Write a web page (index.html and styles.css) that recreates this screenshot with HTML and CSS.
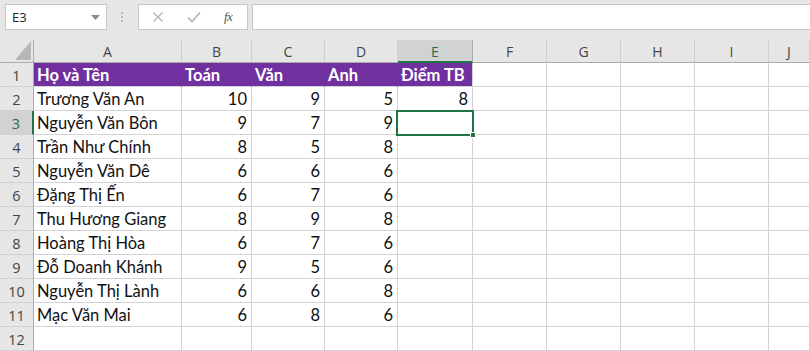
FILE: index.html
```html
<!DOCTYPE html>
<html lang="vi">
<head>
<meta charset="utf-8">
<title>Excel</title>
<link rel="stylesheet" href="styles.css">
</head>
<body>
<div class="toolbar">
  <div class="namebox">
    <span class="nb-text">E3</span>
    <svg class="nb-arrow" width="9" height="5" viewBox="0 0 9 5"><path d="M0 0H9L4.5 5Z" fill="#8a8a8a"/></svg>
  </div>
  <div class="dots"><span></span><span></span><span></span></div>
  <div class="fbtns">
    <svg class="fb-icon" width="12" height="12" viewBox="0 0 12 12"><path d="M1.5 1.5L10.5 10.5M10.5 1.5L1.5 10.5" stroke="#b3b3b3" stroke-width="1.3" fill="none"/></svg>
    <svg class="fb-icon" width="14" height="12" viewBox="0 0 14 12"><path d="M1 6.5L5 10.5L13 1.5" stroke="#b3b3b3" stroke-width="1.6" fill="none"/></svg>
    <span class="fx">fx</span>
  </div>
  <div class="finput"></div>
</div>
<div class="sheet">
  <div class="ch corner"><svg width="16" height="19" viewBox="0 0 16 19"><path d="M16 0V19H0Z" fill="#b6b6b6"/></svg></div>
  <div class="ch">A</div><div class="ch">B</div><div class="ch">C</div><div class="ch">D</div><div class="ch sel">E</div><div class="ch">F</div><div class="ch">G</div><div class="ch">H</div><div class="ch">I</div><div class="ch">J</div>

  <div class="rh">1</div><div class="c hd">Họ và Tên</div><div class="c hd">Toán</div><div class="c hd">Văn</div><div class="c hd">Anh</div><div class="c hd hd-last">Điểm TB</div><div class="c"></div><div class="c"></div><div class="c"></div><div class="c"></div><div class="c"></div>

  <div class="rh">2</div><div class="c">Trương Văn An</div><div class="c n">10</div><div class="c n">9</div><div class="c n">5</div><div class="c n">8</div><div class="c"></div><div class="c"></div><div class="c"></div><div class="c"></div><div class="c"></div>

  <div class="rh rsel">3</div><div class="c">Nguyễn Văn Bôn</div><div class="c n">9</div><div class="c n">7</div><div class="c n">9</div><div class="c active"><span class="selbox"><span class="handle"></span></span></div><div class="c"></div><div class="c"></div><div class="c"></div><div class="c"></div><div class="c"></div>

  <div class="rh">4</div><div class="c">Trần Như Chính</div><div class="c n">8</div><div class="c n">5</div><div class="c n">8</div><div class="c"></div><div class="c"></div><div class="c"></div><div class="c"></div><div class="c"></div><div class="c"></div>

  <div class="rh">5</div><div class="c">Nguyễn Văn Dê</div><div class="c n">6</div><div class="c n">6</div><div class="c n">6</div><div class="c"></div><div class="c"></div><div class="c"></div><div class="c"></div><div class="c"></div><div class="c"></div>

  <div class="rh">6</div><div class="c">Đặng Thị Ến</div><div class="c n">6</div><div class="c n">7</div><div class="c n">6</div><div class="c"></div><div class="c"></div><div class="c"></div><div class="c"></div><div class="c"></div><div class="c"></div>

  <div class="rh">7</div><div class="c">Thu Hương Giang</div><div class="c n">8</div><div class="c n">9</div><div class="c n">8</div><div class="c"></div><div class="c"></div><div class="c"></div><div class="c"></div><div class="c"></div><div class="c"></div>

  <div class="rh">8</div><div class="c">Hoàng Thị Hòa</div><div class="c n">6</div><div class="c n">7</div><div class="c n">6</div><div class="c"></div><div class="c"></div><div class="c"></div><div class="c"></div><div class="c"></div><div class="c"></div>

  <div class="rh">9</div><div class="c">Đỗ Doanh Khánh</div><div class="c n">9</div><div class="c n">5</div><div class="c n">6</div><div class="c"></div><div class="c"></div><div class="c"></div><div class="c"></div><div class="c"></div><div class="c"></div>

  <div class="rh">10</div><div class="c">Nguyễn Thị Lành</div><div class="c n">6</div><div class="c n">6</div><div class="c n">8</div><div class="c"></div><div class="c"></div><div class="c"></div><div class="c"></div><div class="c"></div><div class="c"></div>

  <div class="rh">11</div><div class="c">Mạc Văn Mai</div><div class="c n">6</div><div class="c n">8</div><div class="c n">6</div><div class="c"></div><div class="c"></div><div class="c"></div><div class="c"></div><div class="c"></div><div class="c"></div>

  <div class="rh">12</div><div class="c"></div><div class="c"></div><div class="c"></div><div class="c"></div><div class="c"></div><div class="c"></div><div class="c"></div><div class="c"></div><div class="c"></div><div class="c"></div>
</div>
</body>
</html>
```

FILE: styles.css
```css
* { box-sizing: border-box; }
html, body { margin: 0; padding: 0; }
body {
  width: 810px;
  height: 351px;
  overflow: hidden;
  background: #e6e6e6;
  font-family: "Open Sans", "Noto Sans", sans-serif;
}

.toolbar {
  height: 40px;
  display: flex;
  align-items: flex-start;
  padding: 4px 0 0 5px;
}
.namebox {
  width: 102px;
  height: 26px;
  background: #fff;
  border: 1px solid #c8c8c8;
  display: flex;
  align-items: center;
  justify-content: space-between;
  padding: 0 6px 0 6px;
  font-size: 13px;
  color: #222;
}
.nb-arrow { margin-top: 1px; }
.dots {
  width: 31px;
  height: 26px;
  display: flex;
  flex-direction: column;
  align-items: center;
  justify-content: center;
  gap: 2px;
  padding-right: 2px;
}
.dots span {
  width: 2px;
  height: 2px;
  background: #b8b8b8;
}
.fbtns {
  width: 110px;
  height: 26px;
  background: #fff;
  border: 1px solid #c8c8c8;
  display: flex;
  align-items: center;
  padding: 0 0 0 13px;
  gap: 23px;
}
.fx {
  font-family: "Liberation Serif", serif;
  font-style: italic;
  font-size: 13px;
  color: #555;
  margin-left: 0;
  letter-spacing: -0.5px;
}
.finput {
  flex: 1;
  margin-left: 4px;
  height: 26px;
  background: #fff;
  border: 1px solid #c8c8c8;
  border-right: none;
}

.sheet {
  display: grid;
  grid-template-columns: 34px 148px 70px 73px 73px 75px 74px 74px 74px 74px 1fr;
  grid-template-rows: 23px repeat(12, 24px);
  background: #fff;
}
.ch {
  background: #e6e6e6;
  border-right: 1px solid #cfcfcf;
  border-bottom: 1px solid #ababab;
  display: flex;
  align-items: center;
  justify-content: center;
  font-size: 14px;
  color: #444;
  padding-top: 1px;
}
.ch.corner {
  justify-content: flex-end;
  align-items: flex-end;
  padding: 0 2px 2px 0;
  border-right: 1px solid #ababab;
}
.ch.corner svg { display: block; }
.ch.sel {
  background: #d2d2d2;
  color: #217346;
  border-bottom: 2px solid #217346;
  border-right: 1px solid #ababab;
}
.rh {
  background: #e6e6e6;
  border-right: 1px solid #ababab;
  border-bottom: 1px solid #d0d0d0;
  display: flex;
  align-items: center;
  justify-content: center;
  font-family: "Open Sans", "Noto Sans", sans-serif;
  font-size: 14.5px;
  color: #444;
  padding-top: 1px;
}
.rh.rsel {
  background: #d2d2d2;
  color: #217346;
  border-right: 2px solid #217346;
}
.c {
  border-right: 1px solid #d4d4d4;
  border-bottom: 1px solid #d4d4d4;
  font-family: Lato, "Liberation Sans", sans-serif;
  font-size: 16.5px;
  color: #111;
  display: flex;
  align-items: center;
  padding: 1px 4px 0 3px;
  white-space: nowrap;
  overflow: visible;
}
.c.n { justify-content: flex-end; }
.c.hd {
  background: #7030a0;
  color: #fff;
  font-weight: bold;
  border-right-color: #7030a0;
}
.c.hd-last { border-right-color: #d4d4d4; }
.c.active { position: relative; }
.selbox {
  position: absolute;
  left: -2px;
  top: -1px;
  right: -2px;
  bottom: -2px;
  border: 2px solid #217346;
}
.handle {
  position: absolute;
  right: -4px;
  bottom: -4px;
  width: 6px;
  height: 6px;
  background: #217346;
  border: 1px solid #fff;
}
```
